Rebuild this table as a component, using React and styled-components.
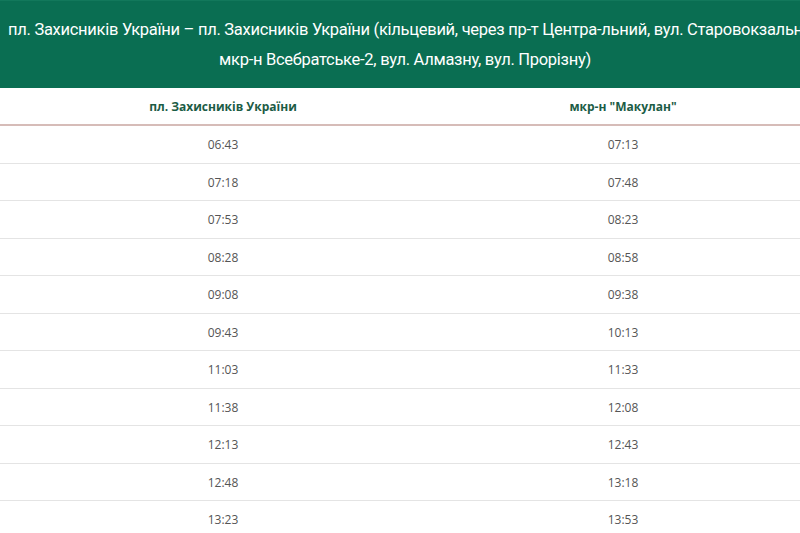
import React from "react";
import styled, { createGlobalStyle } from "styled-components";

const GlobalStyle = createGlobalStyle`
  html, body {
    margin: 0;
    padding: 0;
    background: #fff;
    overflow: hidden;
  }
`;

const Page = styled.div`
  width: 800px;
  height: 533px;
  overflow: hidden;
`;

const Header = styled.div`
  width: 810px;
  height: 88px;
  box-sizing: border-box;
  padding: 14px 8px 0;
  background: #0a6e52;
  border-top: 1px solid #12785b;
  color: #fff;
  font-family: Roboto, "Liberation Sans", sans-serif;
  font-size: 16.5px;
  letter-spacing: -0.28px;
  line-height: 30px;
  text-align: center;
  white-space: nowrap;
`;

const Table = styled.div`
  display: grid;
  grid-template-columns: 446px 1fr;
  font-family: "Open Sans", sans-serif;
  font-size: 12px;
`;

const HeadCell = styled.div`
  height: 36px;
  display: flex;
  align-items: center;
  justify-content: center;
  font-weight: 700;
  color: #1c5c45;
  border-bottom: 2px solid #d6bcb8;
`;

const Cell = styled.div`
  height: 37.5px;
  box-sizing: border-box;
  display: flex;
  align-items: center;
  justify-content: center;
  color: #555;
  border-bottom: 1px solid #e4e4e4;
  padding-top: 1px;
`;

const rows = [
  ["06:43", "07:13"],
  ["07:18", "07:48"],
  ["07:53", "08:23"],
  ["08:28", "08:58"],
  ["09:08", "09:38"],
  ["09:43", "10:13"],
  ["11:03", "11:33"],
  ["11:38", "12:08"],
  ["12:13", "12:43"],
  ["12:48", "13:18"],
  ["13:23", "13:53"],
];

export default function App() {
  return (
    <Page>
      <GlobalStyle />
      <Header>
        пл. Захисників України – пл. Захисників України (кільцевий, через пр-т Центра-льний, вул. Старовокзальну,
        <br />
        мкр-н Всебратське-2, вул. Алмазну, вул. Прорізну)
      </Header>
      <Table>
        <HeadCell>пл. Захисників України</HeadCell>
        <HeadCell>мкр-н "Макулан"</HeadCell>
        {rows.map(([a, b]) => (
          <React.Fragment key={a}>
            <Cell>{a}</Cell>
            <Cell>{b}</Cell>
          </React.Fragment>
        ))}
      </Table>
    </Page>
  );
}
